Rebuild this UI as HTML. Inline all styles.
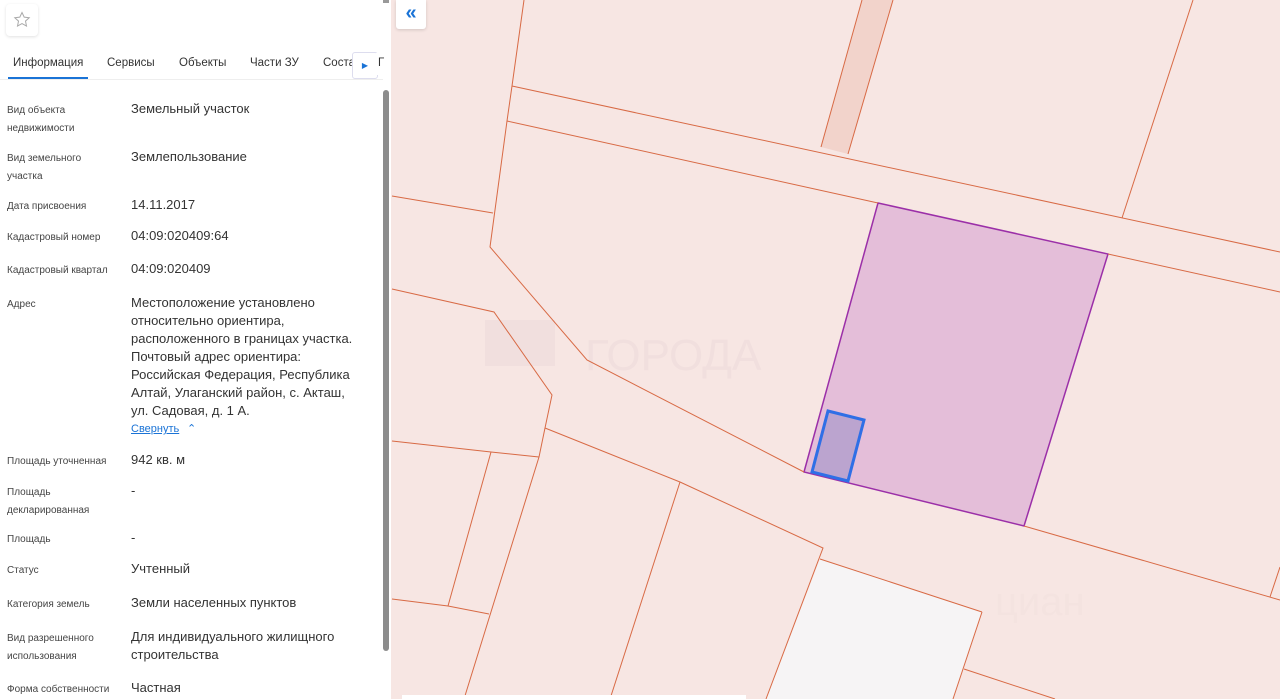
<!DOCTYPE html>
<html><head><meta charset="utf-8"><style>
body{margin:0;width:1280px;height:699px;overflow:hidden;position:relative;font-family:"Liberation Sans",sans-serif;background:#f7e6e3}
#panel{position:absolute;left:0;top:0;width:391px;height:699px;background:#fff;overflow:hidden}
.star{position:absolute;left:6px;top:4px;width:32px;height:32px;border-radius:4px;box-shadow:0 1px 3px rgba(0,0,0,.12);background:#fff}
.tab{position:absolute;top:57px;font-size:11.5px;color:#333;white-space:nowrap}
.lab{position:absolute;left:7px;font-size:10px;line-height:18px;color:#444}
.val{position:absolute;left:131px;font-size:13px;line-height:18px;color:#333}
.scroll{position:absolute;left:383px;top:90px;width:6px;height:561px;background:#8c8c8c;border-radius:3px}
</style></head><body>
<svg style="position:absolute;left:0;top:0" width="1280" height="699">
<rect x="392" y="0" width="888" height="699" fill="#f7e6e3"/>
<polygon points="862,0 893,0 848,154 821,147" fill="#f2d3cb"/>
<polygon points="820,559 982,612 953,699 766,699" fill="#f6f4f5"/>
<g font-family="Liberation Sans,sans-serif" fill="#f1dfde">
<rect x="485" y="320" width="70" height="46"/>
<text x="585" y="370" font-size="44">ГОРОДА</text>
<text x="995" y="615" font-size="40" fill="#f4e3e0">циан</text>
</g>
<polygon points="878,203 1108,254 1024,526 804,472" fill="#e4bed9" stroke="#9b2fa8" stroke-width="1.5"/>
<polygon points="828,411 864,420 848,481 812,472" fill="#bba4cf" stroke="#2f6fe6" stroke-width="3"/>
<g fill="none" stroke="#d86a45" stroke-width="1">
<polyline points="524,0 512,86 507,121 490,247 587,360 804,472"/>
<line x1="512" y1="86" x2="1280" y2="252"/>
<line x1="507" y1="121" x2="878" y2="203"/>
<line x1="1108" y1="254" x2="1280" y2="292"/>
<line x1="862" y1="0" x2="821" y2="147"/>
<line x1="893" y1="0" x2="848" y2="154"/>
<line x1="1193" y1="0" x2="1122" y2="218"/>
<line x1="392" y1="196" x2="493" y2="213"/>
<polyline points="392,289 494,312 552,395 545,428 539,457 464,699"/>
<polyline points="392,441 491,452 539,457"/>
<line x1="491" y1="452" x2="448" y2="606"/>
<polyline points="392,599 448,606 489,614"/>
<polyline points="545,428 680,482 823,548 766,699"/>
<line x1="680" y1="482" x2="610" y2="699"/>
<line x1="820" y1="559" x2="982" y2="612"/>
<line x1="982" y1="612" x2="953" y2="699"/>
<line x1="964" y1="669" x2="1055" y2="699"/>
<line x1="1024" y1="526" x2="1280" y2="600"/>
<line x1="1270" y1="597" x2="1280" y2="567"/>
</g>
<rect x="402" y="695" width="344" height="4" fill="#fff"/>
</svg>
<div style="position:absolute;left:396px;top:0;width:30px;height:29px;background:#fff;border-radius:0 0 3px 3px;box-shadow:0 1px 3px rgba(0,0,0,.15);color:#1a73d6;font-size:20px;line-height:26px;text-align:center;font-weight:bold">«</div>
<div id="panel">
<div class="star"><svg width="32" height="32"><path d="M16 8.5l2.2 4.6 5 .6-3.7 3.4 1 5-4.5-2.5-4.5 2.5 1-5-3.7-3.4 5-.6z" fill="none" stroke="#aaa" stroke-width="1"/></svg></div>
<div class="tab" style="left:13px">Информация</div>
<div class="tab" style="left:107px">Сервисы</div>
<div class="tab" style="left:179px">Объекты</div>
<div class="tab" style="left:250px">Части ЗУ</div>
<div class="tab" style="left:323px">Соста</div>
<div style="position:absolute;left:8px;top:77px;width:80px;height:2px;background:#1a73d6"></div>
<div style="position:absolute;left:0;top:79px;width:383px;height:1px;background:#eee"></div>
<div style="position:absolute;left:352px;top:52px;width:24px;height:25px;background:#fff;border:1px solid #dde;border-radius:3px;color:#1a73d6;font-size:8px;line-height:25px;text-align:center">▶</div>
<div style="position:absolute;left:376px;top:53px;width:8px;height:22px;background:#fff"></div>
<div style="position:absolute;left:378px;top:57px;font-size:11.5px;color:#333">Г</div>
<div style="position:absolute;left:383px;top:0;width:6px;height:3px;background:#999"></div>
<div class="scroll"></div>

<div class="lab" style="top:102px">Вид объекта<br>недвижимости</div><div class="val" style="top:100px">Земельный участок</div>
<div class="lab" style="top:150px">Вид земельного<br>участка</div><div class="val" style="top:148px">Землепользование</div>
<div class="lab" style="top:198px">Дата присвоения</div><div class="val" style="top:196px">14.11.2017</div>
<div class="lab" style="top:229px">Кадастровый номер</div><div class="val" style="top:227px">04:09:020409:64</div>
<div class="lab" style="top:262px">Кадастровый квартал</div><div class="val" style="top:260px">04:09:020409</div>
<div class="lab" style="top:296px">Адрес</div><div class="val" style="top:294px">Местоположение установлено<br>относительно ориентира,<br>расположенного в границах участка.<br>Почтовый адрес ориентира:<br>Российская Федерация, Республика<br>Алтай, Улаганский район, с. Акташ,<br>ул. Садовая, д. 1 А.</div>
<div style="position:absolute;left:131px;top:423px;font-size:11px;color:#1a73d6;text-decoration:underline">Свернуть</div>
<div style="position:absolute;left:187px;top:422px;font-size:11px;color:#1a73d6">⌃</div>
<div class="lab" style="top:453px">Площадь уточненная</div><div class="val" style="top:451px">942 кв. м</div>
<div class="lab" style="top:484px">Площадь<br>декларированная</div><div class="val" style="top:482px">-</div>
<div class="lab" style="top:531px">Площадь</div><div class="val" style="top:529px">-</div>
<div class="lab" style="top:562px">Статус</div><div class="val" style="top:560px">Учтенный</div>
<div class="lab" style="top:596px">Категория земель</div><div class="val" style="top:594px">Земли населенных пунктов</div>
<div class="lab" style="top:630px">Вид разрешенного<br>использования</div><div class="val" style="top:628px">Для индивидуального жилищного<br>строительства</div>
<div class="lab" style="top:681px">Форма собственности</div><div class="val" style="top:679px">Частная</div>
</div>
</body></html>
